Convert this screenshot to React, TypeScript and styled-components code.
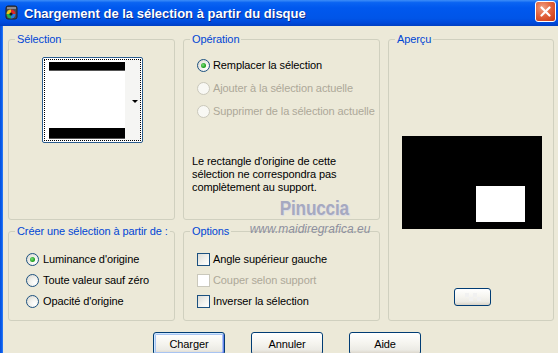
import React from "react";
import styled, { createGlobalStyle } from "styled-components";

const GlobalStyle = createGlobalStyle`
  html, body {
    margin: 0;
    padding: 0;
    background: #ece9d8;
  }
  body {
    font-family: "Liberation Sans", Arial, sans-serif;
    font-size: 11px;
    letter-spacing: -0.1px;
    color: #000;
  }
`;

const Window = styled.div`
  position: relative;
  width: 558px;
  height: 353px;
  overflow: hidden;
  background: #ece9d8;
  display: flex;
  flex-direction: column;
`;

const TitleBar = styled.div`
  flex: none;
  height: 26px;
  display: flex;
  align-items: center;
  padding: 0 2px 0 4px;
  background: linear-gradient(
    180deg,
    #3d8ef8 0%,
    #0a64f2 10%,
    #0058ee 30%,
    #0055e8 70%,
    #0049da 88%,
    #003fc2 100%
  );
`;

const TitleText = styled.span`
  margin-left: 4px;
  color: #fff;
  font-weight: bold;
  font-size: 13px;
  letter-spacing: 0;
  text-shadow: 1px 1px 0 #0b2a8a;
`;

const CloseButton = styled.div`
  margin-left: auto;
  margin-top: -3px;
  width: 21px;
  height: 21px;
  box-sizing: border-box;
  border: 1px solid #fff;
  border-radius: 3px;
  background: radial-gradient(circle at 35% 30%, #f0a083 0%, #e2643e 45%, #c8350f 100%);
  display: flex;
  align-items: center;
  justify-content: center;
`;

const Frame = styled.div`
  flex: 1;
  display: flex;
`;

const SideBorder = styled.div`
  width: 3px;
  flex: none;
  background: linear-gradient(90deg, #0a4ed8, #0860f0 60%, #3a82f5);
`;

const Content = styled.div`
  flex: 1;
  display: flex;
  flex-direction: column;
  padding: 7px 0 0 5px;
`;

const Groups = styled.div`
  display: grid;
  grid-template-columns: 167px 197px 166px;
  grid-template-rows: 187px 96px;
  grid-template-areas:
    "sel op prev"
    "make opt prev";
  column-gap: 8px;
  row-gap: 5px;
`;

const Group = styled.fieldset<{ $area: string }>`
  grid-area: ${(p) => p.$area};
  margin: 0;
  padding: 0;
  min-width: 0;
  border: 1px solid #d0d0bf;
  border-radius: 3px;
  display: flex;
  flex-direction: column;
`;

const Legend = styled.legend`
  margin-left: 6px;
  padding: 0 2px;
  line-height: 13px;
  font-size: 11px;
  color: #0046d5;
`;

/* --- Sélection --- */

const ListBox = styled.div`
  align-self: center;
  margin: 11px 0 0 2px;
  width: 101px;
  height: 86px;
  box-sizing: border-box;
  border: 1px solid #2c5d8e;
  border-radius: 2px;
  background: #fff;
  padding: 1px;
  display: flex;
`;

const FocusRect = styled.div`
  flex: 1;
  border: 1px dotted #000;
  display: flex;
`;

const Thumb = styled.div`
  flex: 1;
  display: flex;
  flex-direction: column;
  justify-content: space-between;
  padding: 2px 0 1px 4px;
  background: #fff;
`;

const Bar = styled.div<{ $h: number }>`
  height: ${(p) => p.$h}px;
  background: #000;
  border-bottom: 1px solid #555;
`;

const Strip = styled.div`
  width: 13px;
  background: #f5f5f3;
  display: flex;
  align-items: center;
  justify-content: flex-end;
  padding-right: 2px;
`;

const Arrow = styled.div`
  width: 0;
  height: 0;
  border-left: 3px solid transparent;
  border-right: 3px solid transparent;
  border-top: 3px solid #000;
  margin-top: 2px;
`;

/* --- radios & checkboxes --- */

const OptionList = styled.div<{ $top: number; $left: number; $row: number }>`
  display: flex;
  flex-direction: column;
  padding: ${(p) => p.$top}px 0 0 ${(p) => p.$left}px;

  & > * {
    height: ${(p) => p.$row}px;
  }
`;

const OptionRow = styled.label<{ $disabled?: boolean; $gap: number }>`
  display: flex;
  align-items: center;
  gap: ${(p) => p.$gap}px;
  line-height: 13px;
  color: ${(p) => (p.$disabled ? "#aca899" : "#000")};
  white-space: nowrap;
`;

const RadioCircle = styled.span<{ $disabled?: boolean }>`
  width: 13px;
  height: 13px;
  box-sizing: border-box;
  border-radius: 50%;
  border: 1px solid ${(p) => (p.$disabled ? "#cac8bb" : "#1c5180")};
  background: ${(p) =>
    p.$disabled
      ? "#f8f8f4"
      : "radial-gradient(circle at 70% 70%, #ffffff 0%, #f2f2ee 40%, #d6d4cb 100%)"};
  display: flex;
  align-items: center;
  justify-content: center;
  flex: none;
`;

const RadioDot = styled.span`
  width: 5px;
  height: 5px;
  border-radius: 50%;
  background: radial-gradient(circle at 40% 40%, #7ee07e 0%, #21a121 60%, #178a17 100%);
`;

const CheckSquare = styled.span<{ $disabled?: boolean }>`
  width: 13px;
  height: 13px;
  box-sizing: border-box;
  border: 1px solid ${(p) => (p.$disabled ? "#cac8bb" : "#1c5180")};
  background: ${(p) =>
    p.$disabled ? "#fff" : "linear-gradient(135deg, #dcdcd7 0%, #f4f4f0 60%, #ffffff 100%)"};
  flex: none;
`;

const Note = styled.div`
  margin: 32px 0 0 8px;
  line-height: 13px;
`;

/* --- Aperçu --- */

const Preview = styled.div`
  align-self: center;
  margin: 90px 0 0 1px;
  width: 140px;
  height: 93px;
  box-sizing: border-box;
  background: #000;
  display: flex;
  justify-content: flex-end;
  align-items: flex-end;
  padding: 0 17px 7px 0;
`;

const PreviewWhite = styled.div`
  width: 49px;
  height: 36px;
  background: #fff;
`;

/* --- buttons --- */

const Button = styled.div<{ $w: number; $h: number; $default?: boolean }>`
  width: ${(p) => p.$w}px;
  height: ${(p) => p.$h}px;
  box-sizing: border-box;
  border: 1px solid #003c74;
  border-radius: 3px;
  background: linear-gradient(180deg, #ffffff 0%, #f6f5f0 45%, #ecebe5 80%, #d8d2c6 100%);
  box-shadow: ${(p) =>
    p.$default ? "inset 1px 1px 0 #cee7ff, inset -1px -1px 0 #6982ee, inset 0 0 0 2px #a8c4f2" : "none"};
  display: flex;
  align-items: center;
  justify-content: center;
  flex: none;
`;

const SmallButton = styled(Button)`
  align-self: center;
  margin: 59px 0 0 3px;
`;

const ButtonRow = styled.div`
  display: flex;
  gap: 26px;
  margin-top: 11px;
  padding-left: 145px;
`;

/* --- watermark over the dialog --- */

const Watermark = styled.div`
  position: absolute;
  left: 248px;
  top: 196px;
  width: 124px;
  display: flex;
  flex-direction: column;
  align-items: center;
  pointer-events: none;
`;

const MarkName = styled.span`
  display: inline-block;
  margin-left: 8px;
  font-size: 20px;
  font-weight: bold;
  letter-spacing: -0.2px;
  line-height: 24px;
  color: #a6a9c0;
  text-shadow: 1px 1px 1px #d9dae4;
  transform: scaleX(0.86);
`;

const MarkUrl = styled.span`
  margin-top: 3px;
  font-size: 12px;
  font-style: italic;
  line-height: 13px;
  letter-spacing: 0;
  color: #8d8f9e;
`;

const AppIcon = () => (
  <svg width="16" height="16" viewBox="0 0 16 16">
    <rect x="2" y="1" width="11" height="13" rx="2" fill="#4a4a50" stroke="#1f1f24" />
    <rect x="3" y="2" width="9" height="2" fill="#8a8a92" />
    <path d="M7 9 L7 4.5 A4.5 4.5 0 0 1 11.5 9 Z" fill="#e0262a" />
    <path d="M7 9 L11.5 9 A4.5 4.5 0 0 1 7 13.5 Z" fill="#2a7de0" />
    <path d="M7 9 L7 13.5 A4.5 4.5 0 0 1 2.5 9 Z" fill="#21b04a" />
    <path d="M7 9 L2.5 9 A4.5 4.5 0 0 1 7 4.5 Z" fill="#e8c91c" />
    <circle cx="7" cy="9" r="1.6" fill="#1a1a1a" />
  </svg>
);

const CloseGlyph = () => (
  <svg width="11" height="11" viewBox="0 0 11 11">
    <path d="M1.5 1.5 L9.5 9.5 M9.5 1.5 L1.5 9.5" stroke="#fff" strokeWidth="2.2" strokeLinecap="round" />
  </svg>
);

const Checker = () => (
  <svg width="16" height="8" viewBox="0 0 16 8">
    <rect x="0" y="0" width="4" height="4" fill="#f1f1f1" />
    <rect x="8" y="0" width="4" height="4" fill="#f1f1f1" />
    <rect x="4" y="4" width="4" height="4" fill="#f1f1f1" />
    <rect x="12" y="4" width="4" height="4" fill="#f1f1f1" />
  </svg>
);

const Radio: React.FC<{ checked?: boolean; disabled?: boolean; gap: number; children: React.ReactNode }> = ({
  checked,
  disabled,
  gap,
  children,
}) => (
  <OptionRow $disabled={disabled} $gap={gap}>
    <RadioCircle $disabled={disabled}>{checked && <RadioDot />}</RadioCircle>
    {children}
  </OptionRow>
);

const Check: React.FC<{ disabled?: boolean; children: React.ReactNode }> = ({ disabled, children }) => (
  <OptionRow $disabled={disabled} $gap={3}>
    <CheckSquare $disabled={disabled} />
    {children}
  </OptionRow>
);

export default function App() {
  return (
    <>
      <GlobalStyle />
      <Window>
        <TitleBar>
          <AppIcon />
          <TitleText>Chargement de la sélection à partir du disque</TitleText>
          <CloseButton>
            <CloseGlyph />
          </CloseButton>
        </TitleBar>
        <Frame>
          <SideBorder />
          <Content>
            <Groups>
              <Group $area="sel">
                <Legend>Sélection</Legend>
                <ListBox>
                  <FocusRect>
                    <Thumb>
                      <Bar $h={8} />
                      <Bar $h={10} />
                    </Thumb>
                    <Strip>
                      <Arrow />
                    </Strip>
                  </FocusRect>
                </ListBox>
              </Group>

              <Group $area="op">
                <Legend>Opération</Legend>
                <OptionList $top={8} $left={13} $row={23}>
                  <Radio checked gap={3}>Remplacer la sélection</Radio>
                  <Radio disabled gap={3}>Ajouter à la sélection actuelle</Radio>
                  <Radio disabled gap={3}>Supprimer de la sélection actuelle</Radio>
                </OptionList>
                <Note>
                  Le rectangle d'origine de cette
                  <br />
                  sélection ne correspondra pas
                  <br />
                  complètement au support.
                </Note>
              </Group>

              <Group $area="prev">
                <Legend>Aperçu</Legend>
                <Preview>
                  <PreviewWhite />
                </Preview>
                <SmallButton $w={37} $h={18}>
                  <Checker />
                </SmallButton>
              </Group>

              <Group $area="make">
                <Legend>Créer une sélection à partir de :</Legend>
                <OptionList $top={11} $left={17} $row={21}>
                  <Radio checked gap={4}>Luminance d'origine</Radio>
                  <Radio gap={4}>Toute valeur sauf zéro</Radio>
                  <Radio gap={4}>Opacité d'origine</Radio>
                </OptionList>
              </Group>

              <Group $area="opt">
                <Legend>Options</Legend>
                <OptionList $top={11} $left={13} $row={21}>
                  <Check>Angle supérieur gauche</Check>
                  <Check disabled>Couper selon support</Check>
                  <Check>Inverser la sélection</Check>
                </OptionList>
              </Group>
            </Groups>

            <ButtonRow>
              <Button $w={72} $h={23} $default>
                Charger
              </Button>
              <Button $w={72} $h={23}>
                Annuler
              </Button>
              <Button $w={72} $h={23}>
                Aide
              </Button>
            </ButtonRow>
          </Content>
        </Frame>
        <Watermark>
          <MarkName>Pinuccia</MarkName>
          <MarkUrl>www.maidiregrafica.eu</MarkUrl>
        </Watermark>
      </Window>
    </>
  );
}
